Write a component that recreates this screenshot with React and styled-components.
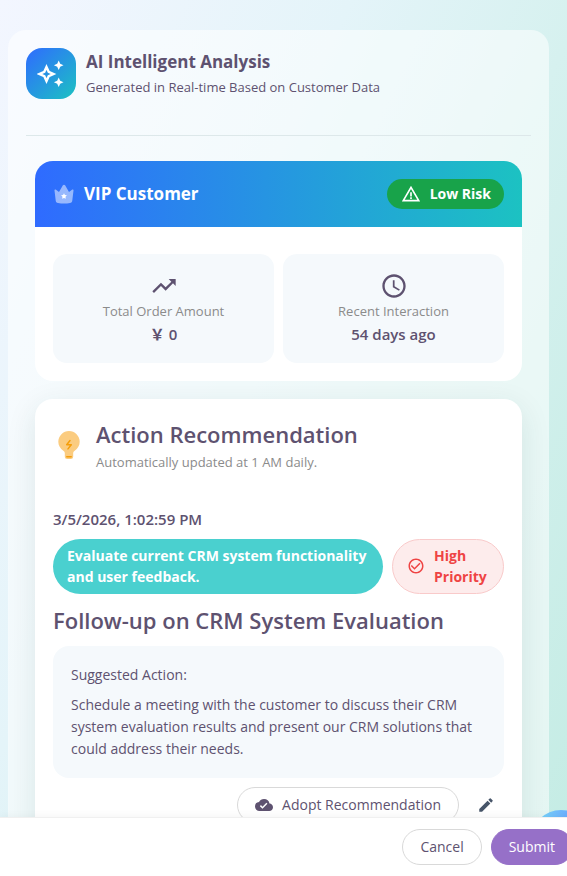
import React from "react";
import styled, { createGlobalStyle } from "styled-components";
import {
    MdAccessTime,
    MdCheckCircleOutline,
    MdCloudDone,
    MdEdit,
    MdTrendingUp,
    MdWarningAmber,
} from "react-icons/md";

const stats = [
    { label: "Total Order Amount", value: "\uffe5 0", Icon: MdTrendingUp },
    { label: "Recent Interaction", value: "54 days ago", Icon: MdAccessTime },
];

const SparkleIcon = () => (
    <svg width="28" height="28" viewBox="0 0 28 28" aria-hidden="true">
        <path
            d="M9.500 7l2.200 4.800 4.800 2.200-4.800 2.200L9.500 21l-2.200-4.800L2.500 14l4.800-2.200z"
            fill="none"
            stroke="#fff"
            strokeWidth="2.400"
        />
        <path
            d="M21.700 .5l1.500 3.300 3.300 1.500-3.300 1.500-1.500 3.300-1.500-3.300-3.300-1.500 3.300-1.500zM21.700 17.500l1.500 3.300 3.300 1.500-3.300 1.500-1.500 3.300-1.500-3.300-3.300-1.500 3.300-1.500z"
            fill="#fff"
        />
    </svg>
);

const CrownIcon = () => (
    <svg width="22" height="22" viewBox="-1 -1 22 22" aria-hidden="true">
        <path
            d="M1.700 16.500L.5 6.600c-.1-1 .8-1.300 1.500-.8l3 2.300L8.900 1.300c.5-.9 1.700-.9 2.200 0L15 8.100l3-2.300c.7-.5 1.600-.2 1.500.8l-1.200 9.900c-.2 1.600-.8 2.200-2.300 2.500-4 .7-8 .7-12 0-1.500-.3-2.100-.9-2.300-2.500z"
            fill="#fff"
            opacity="0.5"
        />
        <path
            d="M10 9.200l.9 1.700 2 .4-1.400 1.500.3 2-1.800-.8-1.800.8.3-2-1.400-1.500 2-.4z"
            fill="#fff"
        />
    </svg>
);

const BulbIcon = () => (
    <svg width="22" height="28" viewBox="0 0 22 28" aria-hidden="true">
        <path
            d="M11 0a10.700 10.700 0 0 1 10.700 10.700c0 3.900-2 6.600-5 9-.9.700-1.500 1.400-1.500 2.500v3.300c0 1.700-1 2.500-2.500 2.500H9.300c-1.500 0-2.500-.8-2.500-2.500v-3.300c0-1.100-.6-1.800-1.500-2.500-3-2.400-5-5.100-5-9A10.700 10.700 0 0 1 11 0z"
            fill="#fbcc80"
        />
        <path
            d="M12 9.500l-3.300 4.200h4.600L10 17.900M8.800 25.800h4.400"
            fill="none"
            stroke="#f59e0b"
            strokeWidth="1.500"
            strokeLinecap="round"
            strokeLinejoin="round"
        />
    </svg>
);

const App = () => (
    <>
        <GlobalStyle />
        <Page>
            <Content>
                <Panel>
                    <PanelHeader>
                        <Logo>
                            <SparkleIcon />
                        </Logo>
                        <div>
                            <PanelTitle>AI Intelligent Analysis</PanelTitle>
                            <PanelSubtitle>
                                Generated in Real-time Based on Customer Data
                            </PanelSubtitle>
                        </div>
                    </PanelHeader>

                    <Cards>
                        <Card>
                            <VipHeader>
                                <VipTitle>
                                    <CrownIcon />
                                    VIP Customer
                                </VipTitle>
                                <RiskBadge>
                                    <MdWarningAmber size={20} />
                                    Low Risk
                                </RiskBadge>
                            </VipHeader>
                            <Stats>
                                {stats.map(({ label, value, Icon }) => (
                                    <Stat key={label}>
                                        <Icon size={28} />
                                        <StatLabel>{label}</StatLabel>
                                        <StatValue>{value}</StatValue>
                                    </Stat>
                                ))}
                            </Stats>
                        </Card>

                        <Card $raised>
                            <ActionHeader>
                                <BulbIcon />
                                <div>
                                    <Heading>Action Recommendation</Heading>
                                    <Muted>Automatically updated at 1 AM daily.</Muted>
                                </div>
                            </ActionHeader>
                            <ActionBody>
                                <Timestamp>3/5/2026, 1:02:59 PM</Timestamp>
                                <Tags>
                                    <TopicTag>
                                        Evaluate current CRM system functionality and
                                        user feedback.
                                    </TopicTag>
                                    <PriorityTag>
                                        <MdCheckCircleOutline size={18} />
                                        <span>High Priority</span>
                                    </PriorityTag>
                                </Tags>
                                <Heading>Follow-up on CRM System Evaluation</Heading>
                                <Suggestion>
                                    <p>Suggested Action:</p>
                                    <p>
                                        Schedule a meeting with the customer to discuss
                                        their CRM system evaluation results and present
                                        our CRM solutions that could address their needs.
                                    </p>
                                </Suggestion>
                                <Actions>
                                    <Button type="button">
                                        <MdCloudDone size={18} />
                                        Adopt Recommendation
                                    </Button>
                                    <IconButton type="button" aria-label="Edit">
                                        <MdEdit size={18} />
                                    </IconButton>
                                </Actions>
                            </ActionBody>
                        </Card>
                    </Cards>
                </Panel>
            </Content>
            <Footer>
                <ChatBubble type="button" aria-label="Chat" />
                <FooterBar>
                    <Button type="button">Cancel</Button>
                    <Button type="submit" $primary>
                        Submit
                    </Button>
                </FooterBar>
            </Footer>
        </Page>
    </>
);

export default App;

const GlobalStyle = createGlobalStyle`
    * {
        box-sizing: border-box;
    }
    body {
        margin: 0;
        color: #5e5270;
        font-family: "Segoe UI", "Open Sans", "Noto Sans CJK SC", sans-serif;
        font-size: 14px;
        line-height: 22px;
    }
    h1, h2, p {
        margin: 0;
    }
    button {
        font: inherit;
        cursor: pointer;
    }
    svg {
        flex-shrink: 0;
    }
`;

const Page = styled.div`
    display: flex;
    flex-direction: column;
    height: 100vh;
    overflow: hidden;
    background: linear-gradient(
        115deg,
        #f3f6ff 0%,
        #e4f4f9 36%,
        #d6f1ef 60%,
        #c4ece4 100%
    );
`;

const Content = styled.main`
    flex: 1;
    min-height: 0;
    padding: 30px 18px 0 8px;
    overflow-y: auto;
    scrollbar-width: none;
`;

const Panel = styled.section`
    padding: 18px;
    background: rgba(255, 255, 255, 0.55);
    border-radius: 18px;
`;

const PanelHeader = styled.header`
    display: flex;
    gap: 10px;
    padding-bottom: 36px;
    border-bottom: 1px solid #dde8ea;
`;

const Logo = styled.div`
    display: flex;
    align-items: center;
    justify-content: center;
    width: 50px;
    height: 51px;
    border-radius: 16px;
    background: linear-gradient(135deg, #2f6bff, #1cc2c2);
`;

const PanelTitle = styled.h1`
    font-size: 17px;
    font-weight: 700;
    line-height: 28px;
`;

const PanelSubtitle = styled.p`
    font-size: 13px;
`;

const Cards = styled.div`
    display: grid;
    gap: 18px;
    padding: 25px 9px;
`;

const Card = styled.article`
    overflow: hidden;
    border-radius: 18px;
    background: #fff;
    box-shadow: ${(props) =>
        props.$raised ? "0 8px 30px rgba(0, 60, 60, 0.1)" : "none"};
`;

const VipHeader = styled.div`
    display: flex;
    align-items: center;
    justify-content: space-between;
    padding: 18px;
    color: #fff;
    background: linear-gradient(90deg, #2f6bff, #1cc2c2);
`;

const VipTitle = styled.h2`
    display: flex;
    align-items: center;
    gap: 9px;
    font-size: 17px;
    font-weight: 700;
`;

const RiskBadge = styled.span`
    display: flex;
    align-items: center;
    gap: 9px;
    padding: 4px 13px 4px 14px;
    border-radius: 15px;
    background: #18a34a;
    font-weight: 700;
`;

const Stats = styled.div`
    display: grid;
    grid-template-columns: 1fr 1fr;
    gap: 9px;
    padding: 27px 18px 18px;
`;

const Stat = styled.div`
    display: flex;
    flex-direction: column;
    align-items: center;
    padding: 18px;
    border-radius: 14px;
    background: #f5f9fc;
`;

const StatLabel = styled.span`
    color: #8b8b8b;
    font-size: 13px;
    line-height: 23px;
`;

const StatValue = styled.span`
    font-size: 15px;
    font-weight: 600;
`;

const ActionHeader = styled.div`
    display: flex;
    align-items: center;
    gap: 16px;
    padding: 18px 23px;
`;

const Heading = styled.h2`
    font-size: 22px;
    font-weight: 600;
    line-height: 34px;
`;

const Muted = styled.p`
    color: #8b8b8b;
    font-size: 13px;
`;

const ActionBody = styled.div`
    padding: 17px 18px 18px;
`;

const Timestamp = styled.p`
    font-size: 15px;
    font-weight: 600;
`;

const Tags = styled.div`
    display: flex;
    gap: 9px;
    margin: 9px 0;
    font-weight: 700;
    line-height: 21px;
`;

const TopicTag = styled.div`
    flex: 1;
    padding: 6px 14px 7px;
    border-radius: 28px;
    color: #fff;
    background: #4ad0cf;
`;

const PriorityTag = styled.div`
    display: flex;
    align-items: center;
    gap: 9px;
    width: 112px;
    padding: 5px 14px 6px;
    border: 1px solid #f9caca;
    border-radius: 28px;
    color: #ef4444;
    background: #fdecec;
`;

const Suggestion = styled.div`
    display: grid;
    gap: 8px;
    margin: 9px 0;
    padding: 18px;
    border-radius: 16px;
    background: #f5f9fc;
`;

const Actions = styled.div`
    display: flex;
    justify-content: flex-end;
    gap: 9px;
`;

const Button = styled.button`
    display: flex;
    align-items: center;
    gap: 9px;
    height: 36px;
    padding: 0 17px;
    border: 1px solid ${(props) => (props.$primary ? "#9670c8" : "#d9d9d9")};
    border-radius: 18px;
    color: ${(props) => (props.$primary ? "#fff" : "#5e5270")};
    background: ${(props) => (props.$primary ? "#9670c8" : "#fff")};
`;

const IconButton = styled.button`
    display: flex;
    align-items: center;
    justify-content: center;
    width: 36px;
    height: 36px;
    padding: 0;
    border: 0;
    color: #475569;
    background: none;
`;

const Footer = styled.footer`
    position: relative;
`;

const ChatBubble = styled.button`
    position: absolute;
    top: -7px;
    right: -24px;
    width: 60px;
    height: 60px;
    border: 0;
    border-radius: 50%;
    background: linear-gradient(100deg, #79e0f8, #6aa8ff 60%);
`;

const FooterBar = styled.div`
    position: relative;
    display: flex;
    justify-content: flex-end;
    gap: 9px;
    width: calc(100% + 6px);
    padding: 11px 0;
    border-top: 1px solid #f0f0f0;
    background: #fff;
    box-shadow: 0 -2px 8px rgba(0, 0, 0, 0.04);
`;
